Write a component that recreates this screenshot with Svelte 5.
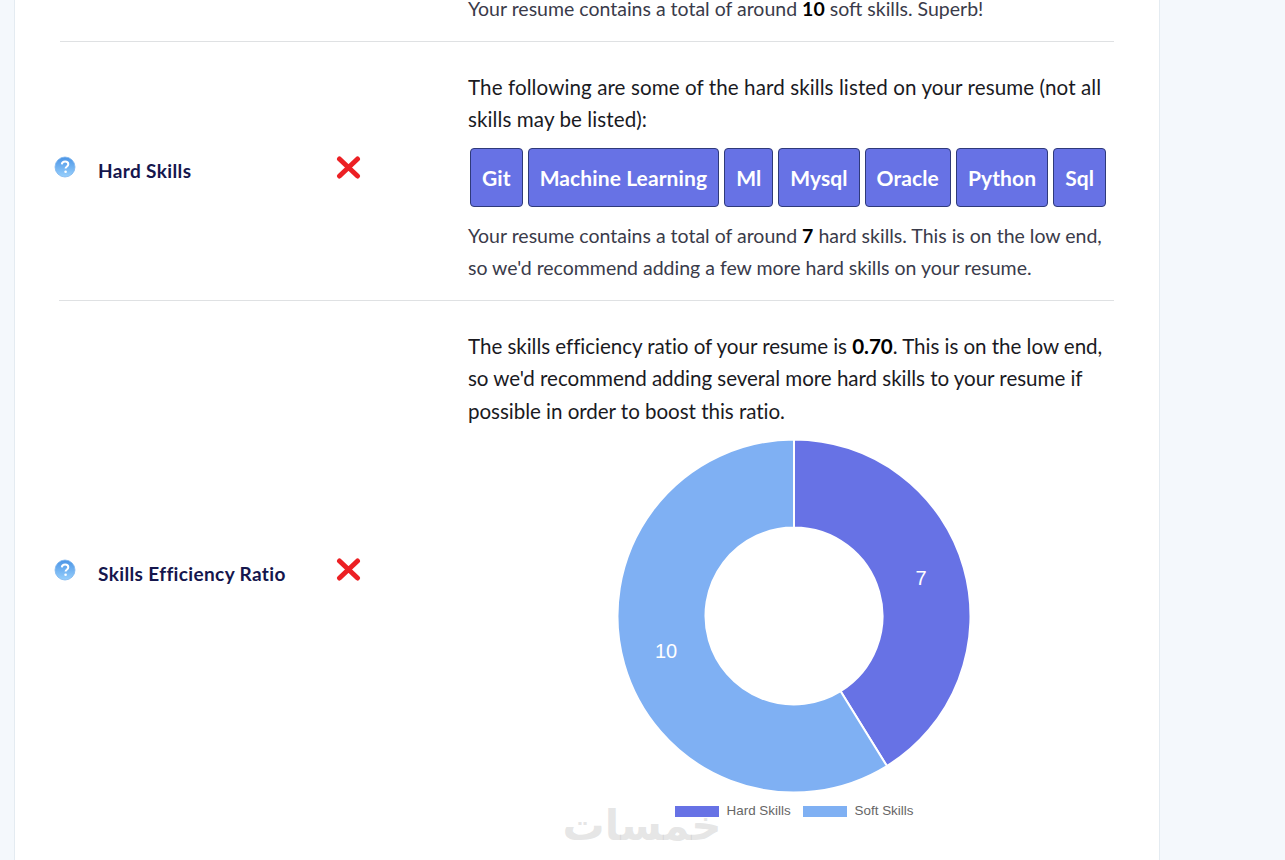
<script>
  const cx = 177, cy = 177, R = 176.5, r = 88.5;
  const data = [
    { label: 'Hard Skills', value: 7, color: '#6772e5' },
    { label: 'Soft Skills', value: 10, color: '#7fb0f3' }
  ];
  const total = data.reduce((s, d) => s + d.value, 0);
  function pt(rad, a) {
    return `${(cx + rad * Math.sin(a)).toFixed(2)} ${(cy - rad * Math.cos(a)).toFixed(2)}`;
  }
  let acc = 0;
  const slices = data.map((d) => {
    const a0 = (acc / total) * Math.PI * 2;
    acc += d.value;
    const a1 = (acc / total) * Math.PI * 2;
    const large = a1 - a0 > Math.PI ? 1 : 0;
    return {
      ...d,
      d: `M${pt(R, a0)}A${R} ${R} 0 ${large} 1 ${pt(R, a1)}L${pt(r, a1)}A${r} ${r} 0 ${large} 0 ${pt(r, a0)}Z`
    };
  });
  const skills = ['Git', 'Machine Learning', 'Ml', 'Mysql', 'Oracle', 'Python', 'Sql'];
</script>

{#snippet help()}
  <svg class="help" width="22" height="22" viewBox="0 0 22 22" aria-hidden="true">
    <defs>
      <linearGradient id="hg" x1="0" y1="0" x2="0" y2="1">
        <stop offset="0" stop-color="#4a94e6" />
        <stop offset="1" stop-color="#98d0fc" />
      </linearGradient>
    </defs>
    <circle cx="11" cy="11" r="10" fill="url(#hg)" stroke="#7db5ee" stroke-width="0.8" />
    <path d="M7.8 8.4c.2-1.8 1.5-2.8 3.3-2.8 1.900 0 3.200 1 3.200 2.600 0 1.300-.8 1.900-1.600 2.500-.7.500-1.100.9-1.100 1.800" fill="none" stroke="#fff" stroke-width="2" />
    <circle cx="11.600" cy="15.800" r="1.300" fill="#fff" />
  </svg>
{/snippet}

{#snippet cross()}
  <svg class="cross" width="25" height="23" viewBox="0 0 25 23" aria-hidden="true">
    <path d="M3.500 3L21.500 20M21.500 3L3.500 20" stroke="#ec2024" stroke-width="5" stroke-linecap="round" fill="none" />
  </svg>
{/snippet}

<div class="page">
  <main class="card">
    <section class="top">
      <p class="note">Your resume contains a total of around <b>10</b> soft skills. Superb!</p>
    </section>

    <section class="row first">
      <div class="side">
        {@render help()}
        <h3>Hard Skills</h3>
        {@render cross()}
      </div>
      <div class="body">
        <p class="lead">The following are some of the hard skills listed on your resume (not all skills may be listed):</p>
        <div class="chips">
          {#each skills as s}<span class="chip">{s}</span>{/each}
        </div>
        <p class="note">Your resume contains a total of around <b>7</b> hard skills. This is on the low end, so we'd recommend adding a few more hard skills on your resume.</p>
      </div>
    </section>

    <section class="row second">
      <div class="side">
        {@render help()}
        <h3>Skills Efficiency Ratio</h3>
        {@render cross()}
      </div>
      <div class="body">
        <p class="lead">The skills efficiency ratio of your resume is <b>0.70</b>. This is on the low end, so we'd recommend adding several more hard skills to your resume if possible in order to boost this ratio.</p>
        <div class="chart">
          <svg width="354" height="354" viewBox="0 0 354 354" role="img" aria-label="Hard and soft skills donut chart">
            {#each slices as s}
              <path d={s.d} fill={s.color} stroke="#fff" stroke-width="2" />
            {/each}
            <text x="304" y="146" class="val">7</text>
            <text x="49" y="219" class="val">10</text>
          </svg>
          <div class="legend">
            {#each data as d}
              <span class="item"><i style:background={d.color}></i>{d.label}</span>
            {/each}
          </div>
        </div>
      </div>
    </section>
    <div class="mark" dir="rtl" lang="ar">خمسات</div>
  </main>
</div>

<style>
  :global(body) {
    margin: 0;
    background: #f4f8fc;
  }
  .page {
    height: 860px;
    overflow: hidden;
    padding-left: 14px;
    width: 1146px;
    font-family: Lato, "Open Sans", sans-serif;
  }
  .card {
    position: relative;
    width: 1146px;
    height: 860px;
    box-sizing: border-box;
    background: #fff;
    border-left: 1px solid #e4ebf1;
    border-right: 1px solid #e4ebf1;
    overflow: hidden;
  }
  p { margin: 0; }
  .top {
    margin: -7px 45px 0 453px;
    height: 48px;
  }
  .row {
    display: grid;
    box-sizing: border-box;
    grid-template-columns: 408px 646px;
    margin: 0 45px;
    border-top: 1px solid #dfe1e3;
  }
  .first { height: 259px; }
  .second {
    height: 546px;
    margin-left: 44px;
    grid-template-columns: 409px 646px;
  }
  .side {
    display: grid;
    grid-template-columns: 45px 237px 25px;
    align-items: center;
    margin-left: -6px;
  }
  .second .side { margin-left: -5px; }
  .help { margin-bottom: 8px; }
  .cross { margin-bottom: 8px; }
  h3 {
    margin: 0;
    font-size: 19px;
    font-weight: 700;
    letter-spacing: 0.37px;
    color: #15164d;
    white-space: nowrap;
  }
  .first h3 { margin: 0 0 1px -1px; }
  .second h3 { margin-left: -1px; }
  .body {
    padding-top: 29px;
  }
  .lead {
    font-size: 20.600px;
    line-height: 32.4px;
    color: #1a1a1f;
    width: 646px;
  }
  .first .lead { letter-spacing: 0.08px; }
  .second .lead { letter-spacing: -0.05px; }
  .note {
    font-size: 19.500px;
    line-height: 32px;
    color: #3a3b4a;
    width: 640px;
  }
  .note b, .lead b { color: #000; }
  .chips {
    display: flex;
    gap: 5px;
    margin: 12px 0 13px 2px;
  }
  .chip {
    box-sizing: border-box;
    height: 59px;
    display: flex;
    align-items: center;
    padding: 0 11px;
    background: #6772e5;
    border: 1px solid #2f3a7a;
    border-radius: 4px;
    color: #fff;
    font-size: 21px;
    font-weight: 700;
    letter-spacing: 0.1px;
    white-space: nowrap;
  }
  .chart {
    margin: 12px 0 0 149px;
    width: 354px;
  }
  .chart svg { display: block; }
  .val {
    font-family: "Liberation Sans", Arial, sans-serif;
    font-size: 20px;
    fill: #fff;
    text-anchor: middle;
  }
  .legend {
    display: flex;
    justify-content: center;
    gap: 12px;
    margin-top: 9px;
    font-family: "Liberation Sans", Arial, sans-serif;
    font-size: 13.400px;
    line-height: 18px;
    color: #666;
  }
  .item { display: flex; align-items: center; gap: 8px; }
  .item i { display: block; width: 44px; height: 11px; }
  .mark {
    position: absolute;
    left: 546px;
    top: 796px;
    width: 162px;
    text-align: center;
    font-family: "DejaVu Sans", sans-serif;
    font-size: 42px;
    font-weight: 700;
    line-height: 60px;
    color: rgba(190, 190, 190, 0.4);
    pointer-events: none;
  }
</style>
